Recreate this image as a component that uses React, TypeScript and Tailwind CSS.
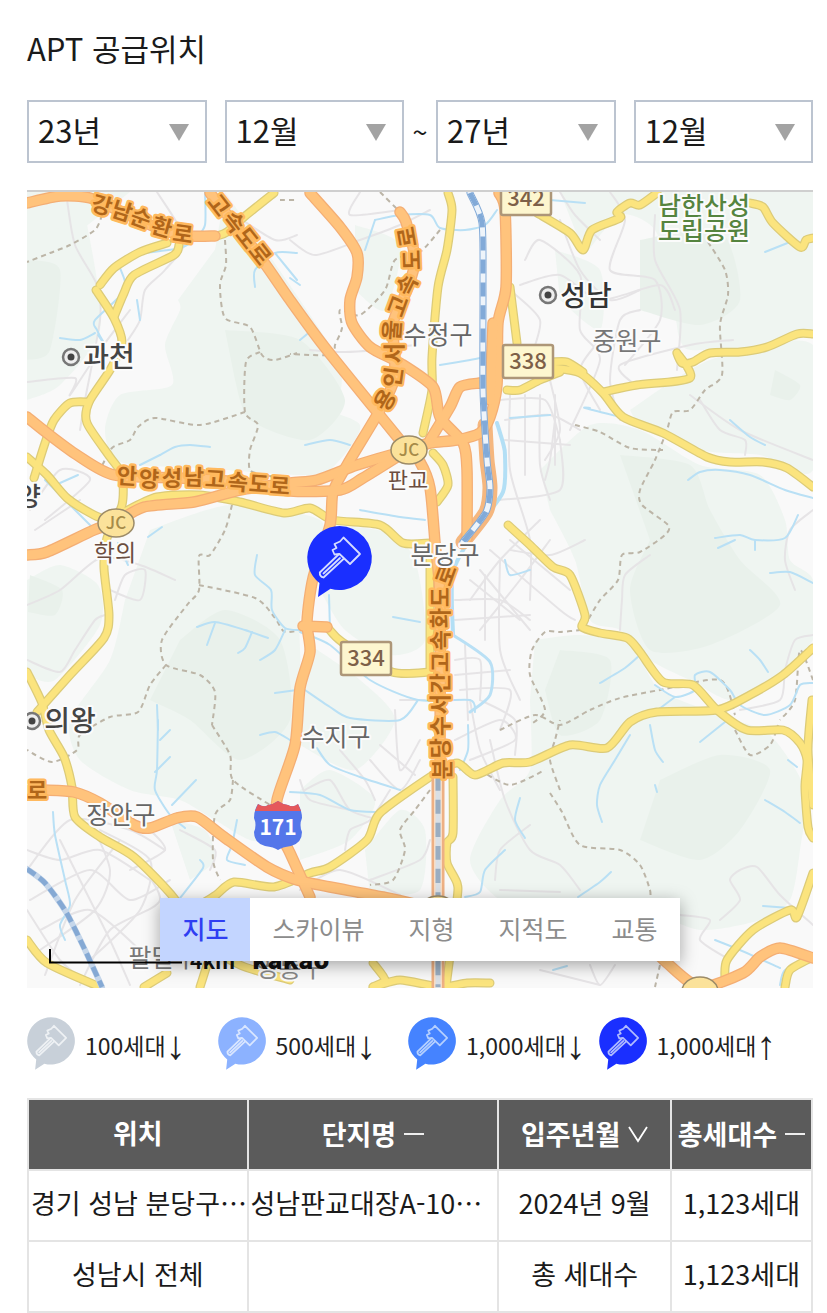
import React from "react";

type Tone = { fill: string; line: string };

/** Turns "x,y x,y ..." into a smooth path through every point. */
function curve(points: string): string {
  const p = points.split(" ").map((s) => s.split(",").map(Number));
  let d = `M${p[0][0]} ${p[0][1]}`;
  for (let i = 0; i < p.length - 1; i++) {
    const a = p[Math.max(i - 1, 0)];
    const b = p[i];
    const c = p[i + 1];
    const e = p[Math.min(i + 2, p.length - 1)];
    const k = 8;
    d += ` C${b[0] + (c[0] - a[0]) / k} ${b[1] + (c[1] - a[1]) / k} ${c[0] - (e[0] - b[0]) / k} ${c[1] - (e[1] - b[1]) / k} ${c[0]} ${c[1]}`;
  }
  return d;
}

const forests = [
  "27,215 75,195 90,240 100,330 60,385 27,400",
  "130,192 27,192 27,215 75,235",
  "222,240 240,310 262,360 300,400 360,425 330,470 300,475 200,468 120,462 105,430 120,395 172,385 165,345 180,310 178,300",
  "225,192 300,300 340,365 330,400 240,350 215,250",
  "27,580 60,565 98,585 100,625 55,680 27,675",
  "150,530 230,505 320,520 315,560 300,620 300,680 285,770 260,840 215,820 180,800 130,790 80,760 70,720 110,660 125,600",
  "330,525 385,532 415,560 425,640 390,655 345,630 320,590",
  "310,645 360,680 395,720 355,770 300,745",
  "560,192 670,192 813,192 813,330 700,350 680,340 672,290 655,230 620,215 585,255",
  "630,410 710,360 813,345 813,470 760,455 700,450 635,420",
  "540,470 590,425 640,430 700,465 760,475 785,520 790,560 813,580 813,640 740,700 690,680 650,660 620,630 590,620 575,560 550,510",
  "535,640 580,635 630,645 660,690 720,715 770,735 805,790 800,850 790,900 760,920 700,930 640,910 560,920 500,900 470,860 500,800 530,770 530,700",
  "365,850 400,810 425,830 420,890 370,895",
  "300,790 330,770 375,800 350,840 300,860",
  "355,225 400,245 385,310 355,290",
  "555,250 600,270 600,330 560,300",
  "170,820 205,830 215,860 190,880",
];

const hills = [
  "225,330 300,340 345,400 310,440 250,420 235,380",
  "27,260 60,270 50,350 27,360",
  "30,575 62,590 55,615 28,612",
  "180,640 225,610 280,640 290,720 240,760 190,720 150,700",
  "620,455 690,465 710,510 740,560 780,605 710,645 650,650 630,590 650,540",
  "640,240 720,230 740,300 700,325 640,310",
  "660,780 720,755 770,770 740,830 700,860 640,840",
  "775,370 800,385 790,400 770,395",
  "560,650 610,660 600,720 560,735 545,690",
];

const streets = [
  "67,200 75,245 97,285 100,320 85,400 80,430",
  "157,192 185,240 165,270 145,290 140,320 128,340",
  "27,382 75,378 70,395 100,350 130,310",
  "235,215 275,240 297,235",
  "27,605 60,590 100,558 140,565 175,580",
  "115,600 125,575 145,570 140,600 110,590",
  "290,240 315,255 360,240 400,225 430,210",
  "310,350 345,352 375,350 415,345",
  "27,660 60,672 75,650 95,620 105,615",
  "45,520 90,480 60,470 30,510",
  "35,530 80,500",
  "27,870 70,820 130,830 165,850",
  "30,900 90,870 130,900 170,880",
  "40,930 90,910 140,950",
  "60,840 80,880 110,940 130,985",
  "90,820 110,870 95,910 40,950",
  "120,840 75,900 45,975",
  "27,850 60,860 100,850 150,880",
  "100,830 150,860 140,910 90,960",
  "130,850 160,900 110,930 80,985",
  "27,910 60,960 90,985",
  "150,830 165,850 130,870",
  "180,830 215,850 210,870",
  "370,880 420,860 430,840",
  "520,285 560,275 600,300 660,285 675,310",
  "510,290 540,320 530,360",
  "525,260 540,240 580,275 580,330 600,360 570,430",
  "610,192 625,220 610,270 655,280 660,320 625,365",
  "655,215 655,260 680,310 677,370",
  "560,220 580,270 610,300 640,290",
  "600,340 580,370 600,410",
  "640,310 620,320 610,380 620,420",
  "550,380 560,430 545,460",
  "500,400 545,400 560,440",
  "505,420 550,415 580,430",
  "505,440 570,445",
  "510,395 510,470 530,540 530,600",
  "525,395 525,475",
  "540,395 540,465 550,500",
  "555,395 555,465",
  "470,600 500,560 540,520",
  "480,630 520,580 550,540",
  "470,580 520,620",
  "490,550 560,610 575,620",
  "510,540 570,590",
  "480,570 530,630",
  "455,600 500,600 530,620",
  "455,620 530,615",
  "485,575 485,640",
  "500,560 500,650 520,700",
  "455,660 480,660 480,700",
  "460,690 510,690 500,730",
  "455,675 510,670",
  "465,645 468,720",
  "510,550 550,555 585,540",
  "545,480 550,460 555,420",
  "500,500 560,490 560,440",
  "395,710 400,770 420,740",
  "370,760 400,790 420,760",
  "380,745 415,775",
  "400,700 425,700",
  "390,790 370,820 350,830 345,850",
  "455,740 500,720 515,740 470,760",
  "470,700 480,750 500,790",
  "480,700 515,720 515,755",
  "490,740 505,800 530,850 560,865 580,890",
  "495,880 500,850 530,825",
  "305,790 330,780 350,810 380,820",
  "300,780 310,800 350,810",
  "340,750 365,780 375,800",
  "620,630 622,600 625,575 650,555",
  "733,340 690,345 620,365 635,385",
  "690,395 740,430 813,460",
  "700,400 720,430 745,440 745,455",
  "813,510 790,530 785,560 795,590",
  "813,635 795,640 785,670 780,700 740,710",
  "720,920 740,900 730,880 740,870 757,867 780,895 813,925",
  "680,915 710,920 700,940 730,960",
  "560,192 575,215 600,240",
  "500,890 560,892",
  "300,890 340,870 400,895",
  "540,970 600,985",
  "590,965 600,985 615,965",
  "360,192 350,215 400,210",
];

const borders = [
  "102,215 95,230 70,245 50,253 27,262",
  "225,240 226,265 220,285 225,318 250,327 262,355 275,360 297,353",
  "260,352 246,362 245,412 258,425 250,450 250,470 265,475 290,480",
  "245,412 200,425 155,418 138,427 130,440 112,448 100,470",
  "232,505 225,530 210,555 199,556 199,590 187,605 162,640 166,665 200,675 215,692 212,725",
  "199,585 255,598 275,618 285,632 308,628",
  "166,665 150,685 138,712 110,717 80,735 77,750 52,762 27,750",
  "212,725 230,755 233,780 270,805",
  "233,780 230,800 215,815 213,860 220,880",
  "380,192 398,210",
  "440,230 420,252 395,260 385,290 360,315 340,310 342,328 335,345 332,355 290,354",
  "708,242 725,270 728,295 720,325 722,375 705,390 690,410 673,412 667,430 655,460 640,490 642,505 668,525 665,535 640,552 622,555 618,580 600,600 588,620",
  "575,425 600,432 630,448 663,450",
  "581,630 560,632 545,632 532,650 530,675 545,710 530,725",
  "500,730 535,715 560,725 590,710 620,698 660,690 720,680 735,715",
  "560,790 550,760 555,740 560,720",
  "550,793 562,812 580,845 620,850 640,865 650,890 650,900",
  "735,730 750,755 770,745 778,725",
  "430,790 415,810 400,830 405,850 393,880 370,885",
  "813,680 800,650 795,700 780,720",
  "660,965 655,987",
  "480,770 510,785 545,770",
  "280,200 298,200",
];

const rivers = [
  "205,192 205,225 195,240",
  "145,253 180,248 195,240",
  "120,268 125,290 95,320 97,330 105,345 98,335",
  "60,338 80,340 95,333",
  "137,300 140,320",
  "255,287 255,270 275,253 297,253",
  "275,253 297,280",
  "160,455 175,447 190,445 210,447",
  "375,220 400,215 430,215 440,228 465,230 485,225 497,210",
  "375,220 365,250",
  "290,278 300,285",
  "300,340 312,330",
  "440,365 470,360 485,357",
  "305,445 330,440 350,445",
  "378,420 390,435",
  "510,418 550,415",
  "550,200 585,203",
  "60,483 78,475",
  "45,480 95,530",
  "140,465 160,455",
  "148,537 162,527",
  "118,543 128,565",
  "257,555 255,575 271,590 272,610 285,628 300,630",
  "197,627 215,622 245,630 268,638",
  "215,623 207,645",
  "252,632 245,648 238,653",
  "285,630 275,650 260,660",
  "275,693 297,690",
  "157,705 158,730",
  "329,595 330,630",
  "300,632 330,645 370,680 418,700 470,700 475,712",
  "305,690 330,707 350,718 400,720 418,700",
  "360,510 400,517 425,520",
  "393,617 420,622",
  "505,560 510,575 530,570",
  "158,720 157,770 155,790 170,815 185,828",
  "170,730 160,740",
  "155,772 170,757",
  "172,805 196,780",
  "260,735 275,732 290,740",
  "237,820 232,845 227,860 245,865",
  "200,860 203,868 180,898",
  "53,812 55,835 65,880 70,905 60,925 65,940",
  "317,748 330,765 360,777 400,790",
  "290,792 320,795 350,810 380,812",
  "468,725 468,750 460,770",
  "520,798 515,820 525,838",
  "505,850 485,870 480,892 465,897",
  "688,480 700,472 720,470 750,475 785,490 813,498",
  "715,538 740,535 755,540 785,538 798,515",
  "755,540 755,550",
  "735,540 718,548",
  "770,573 790,572 813,583",
  "600,683 625,668 640,655",
  "655,685 675,697 695,690 695,675 710,672 730,690 740,705 765,715 790,705 800,685 813,683",
  "675,697 655,712",
  "750,650 760,660 768,672",
  "630,735 615,760 600,785 597,805 602,822",
  "650,725 655,750 663,762",
  "655,785 657,792",
  "765,800 785,812 800,823",
  "788,760 797,767",
  "700,742 725,722",
  "578,897 600,882 611,872",
  "763,906 790,908",
  "715,940 740,950 780,968",
  "553,970 567,966",
  "780,985 785,970 810,962",
  "590,408 585,408 620,417",
  "730,420 750,437 765,445",
  "765,252 790,242",
];

const yellows = [
  "274,193 244,217 227,232 217,236",
  "167,243 140,252 114,268 100,285",
  "179,245 174,255 134,275 124,293 114,317",
  "96,290 114,318 122,343 110,370 89,402 87,423 110,457 122,475 122,505 107,538 104,568 109,615 104,638 70,675 37,712",
  "89,402 70,403 54,420 45,443 34,478",
  "27,457 47,475 67,498 94,515 115,523",
  "122,513 157,497 200,495 240,502 284,513 310,508 333,520 380,525 403,543 430,543",
  "27,672 42,703 49,730 64,757 72,787 75,817 100,837 134,857 174,898 200,940 240,965 290,980",
  "27,940 47,963 100,987",
  "144,987 167,973",
  "200,987 207,965",
  "200,905 216,895 234,882 274,887 310,873 330,867 367,840 380,813 433,775 457,763 475,775 503,763 530,762 570,745 607,748 630,722 657,712 717,710 750,695 783,675 813,648",
  "453,777 453,833 447,843 447,863 457,883 457,900 446,987",
  "448,193 452,210 447,250 438,287 432,357 432,390 423,433",
  "433,453 443,465 448,485 437,502",
  "510,287 517,343",
  "537,213 570,233 583,250 592,230 620,218 617,212 630,203 640,205 657,193",
  "750,203 763,207 773,223 800,247 806,240 813,238",
  "553,368 580,373 603,393 623,417 663,433 707,457 730,462 763,462 787,468 813,487",
  "553,362 567,362 583,372",
  "603,392 637,385 690,378 677,353 682,363 693,362 710,353 740,352 767,347 797,334 813,334",
  "507,390 520,390 540,380 560,372",
  "508,525 530,545 553,567 570,575 585,615 582,627 600,633 627,638 640,652 663,682 693,685 717,710 747,730 783,730 800,743 807,760 805,787 808,827 813,838",
  "812,700 808,750 813,805",
  "813,873 797,917 790,910 753,930 727,960 725,980",
  "813,957 790,970 785,987",
  "328,628 342,642 392,672 430,672",
  "430,560 430,672",
  "373,963 385,980 373,987 400,980 440,987 467,983 490,983",
];

const oranges = [
  "27,203 60,196 90,198 122,212 160,229 190,236 215,236",
  "210,193 260,257 290,300 323,345 373,407 408,450",
  "310,193 340,227 357,253 357,277 350,300 352,323 370,347 400,363 433,387 440,417 463,443 467,470 467,538",
  "400,212 406,222 415,260 407,290 393,323 395,357 393,383 380,410 347,465 333,492 330,525 313,578 307,622 310,652 300,688 295,745 277,800 279,830 290,853 310,897",
  "27,417 47,433 77,455 114,475 180,478 240,482 290,491 340,490 363,478 408,450",
  "27,555 47,552 94,530 115,523 144,507 194,502 240,490 290,483 317,480 357,465 408,450",
  "408,450 430,443 457,440 480,433 490,417 497,385 498,323 506,287 505,210 499,193",
  "490,400 493,323",
  "430,440 450,407 460,387 480,383",
  "408,450 420,462 430,488 435,542 440,600 440,770",
  "44,790 74,792 100,803 134,825 150,828 177,818 197,817 224,837 267,867 297,880 330,887 383,897 440,910",
  "640,935 667,963 700,987 743,973 760,957 780,948 813,958",
  "303,626 327,627",
];

type Glyph = [string, number, number, number];

const roadGlyphs: Glyph[] = [
  ["강", 102, 205, 16], ["남", 122, 211, 18], ["순", 141, 218, 20], ["환", 162, 227, 16], ["로", 183, 234, 8],
  ["고", 219, 205, 52], ["속", 234, 222, 52], ["도", 247, 238, 52], ["로", 260, 254, 52],
  ["용", 385, 400, -60], ["인", 393, 377, -82], ["서", 394, 353, -90], ["울", 392, 330, -86],
  ["고", 398, 306, -70], ["속", 407, 285, -64], ["도", 412, 260, -92], ["로", 407, 237, -100],
  ["안", 127, 476, 3], ["양", 149, 479, 3], ["성", 172, 478, 2], ["남", 194, 477, 2],
  ["고", 215, 479, 3], ["속", 238, 482, 4], ["도", 259, 484, 4], ["로", 280, 486, 4],
  ["분", 442, 769, -90], ["당", 440, 748, -90], ["수", 440, 726, -90], ["서", 440, 704, -90], ["간", 440, 683, -90],
  ["고", 440, 662, -90], ["속", 440, 640, -90], ["화", 440, 618, -90], ["도", 440, 597, -90], ["로", 446, 575, -70],
  ["로", 37, 790, 0],
];

type Label = { text: string; x: number; y: number; size: number; color: string; weight?: number };

const places: Label[] = [
  { text: "과천", x: 109, y: 367, size: 28, color: "#444", weight: 500 },
  { text: "성남", x: 586, y: 306, size: 28, color: "#333", weight: 500 },
  { text: "의왕", x: 70, y: 731, size: 28, color: "#444", weight: 500 },
  { text: "양", x: 29, y: 506, size: 26, color: "#444", weight: 500 },
  { text: "수정구", x: 438, y: 344, size: 25, color: "#666" },
  { text: "중원구", x: 627, y: 350, size: 25, color: "#777" },
  { text: "분당구", x: 445, y: 564, size: 25, color: "#666" },
  { text: "수지구", x: 336, y: 746, size: 25, color: "#666" },
  { text: "장안구", x: 121, y: 824, size: 25, color: "#666" },
  { text: "팔달구", x: 163, y: 967, size: 25, color: "#777" },
  { text: "영통구", x: 290, y: 977, size: 25, color: "#888" },
  { text: "판교", x: 408, y: 488, size: 22, color: "#6b4d40" },
  { text: "학의", x: 115, y: 561, size: 23, color: "#6b4d40" },
  { text: "남한산성", x: 704, y: 215, size: 25, color: "#55843f", weight: 500 },
  { text: "도립공원", x: 704, y: 240, size: 25, color: "#55843f", weight: 500 },
];

function Polys({ items, fill }: { items: string[]; fill: string }) {
  return (
    <g fill={fill}>
      {items.map((pts) => (
        <path key={pts} d={curve(pts) + "Z"} />
      ))}
    </g>
  );
}

function Lines({ items, stroke, width, dash }: { items: string[]; stroke: string; width: number; dash?: string }) {
  return (
    <g fill="none" stroke={stroke} strokeWidth={width} strokeDasharray={dash} strokeLinecap={dash ? "butt" : "round"} strokeLinejoin="round">
      {items.map((pts) => (
        <path key={pts} d={curve(pts)} />
      ))}
    </g>
  );
}

function Hammer({ stroke, width }: { stroke: string; width: number }) {
  return (
    <g fill="none" stroke={stroke} strokeWidth={width} strokeLinejoin="round" strokeLinecap="round">
      <path d="M36.500 11.500 L53 28 L43 38 L32.500 28 L27.500 28.500 L25.500 24 L29.500 22 L27.500 18 L33 15.500 Z" />
      <path d="M31.500 28.500 L12.800 46.500 Q12.500 50.500 16.500 51.500 L36.500 33" />
      <path d="M16.500 47.500 L33 32" />
    </g>
  );
}

function BubbleShape({ fill, line, width }: Tone & { width: number }) {
  return (
    <>
      <path d="M32.500 0 A32.500 32 0 1 1 23.500 62.800 L11 71 L12.500 57 A32.500 32 0 0 1 32.500 0Z" fill={fill} />
      <Hammer stroke={line} width={width} />
    </>
  );
}

function RouteSign({ x, y, n }: { x: number; y: number; n: string }) {
  return (
    <g>
      <rect x={x - 25} y={y - 16} width="50" height="33" rx="2" fill="#fdf6cf" stroke="#ad9678" strokeWidth="2.500" />
      <text x={x} y={y + 8} fontSize="22" fontWeight="500" fill="#7d6048" textAnchor="middle">{n}</text>
    </g>
  );
}

function Junction({ x, y, name }: { x: number; y: number; name?: string }) {
  return (
    <g>
      <ellipse cx={x} cy={y} rx="18" ry="14" fill="#fbe29a" stroke="#9c8b68" strokeWidth="1.500" />
      {name && <text x={x} y={y + 6} fontSize="17" fontWeight="500" fill="#a68b48" textAnchor="middle">{name}</text>}
    </g>
  );
}

function CityDot({ x, y }: { x: number; y: number }) {
  return (
    <g>
      <circle cx={x} cy={y} r="8" fill="#eee" stroke="#777" strokeWidth="2.500" />
      <circle cx={x} cy={y} r="3.500" fill="#444" />
    </g>
  );
}

const rail = "470,193 482,223 483,290 483,390 487,460 490,488 486,512 463,542";
const railSouth = "438,777 438,987";
const railWest = "27,869 45,883 66,912 85,950 102,987";
const stream = "497,423 503,443 505,455 503,492 477,528 453,572 453,635";
const streamSouth = "453,635 490,662 490,695 470,712";

function MapDrawing() {
  return (
    <svg
      viewBox="27 192 786 796"
      preserveAspectRatio="xMidYMid slice"
      className="block h-[796px] w-full bg-[#f9f9f9]"
      role="img"
      aria-label="지도"
    >
      <Polys items={forests} fill="#eff5f1" />
      <Polys items={hills} fill="#e9f1eb" />
      <Lines items={streets} stroke="#e6e4e6" width={2} />
      <Lines items={borders} stroke="#bcb5a7" width={2} dash="5 4" />
      <Lines items={rivers} stroke="#b9e0f5" width={2} />
      <Lines items={[stream]} stroke="#b3dff5" width={4} />
      <Lines items={[streamSouth]} stroke="#b9e0f5" width={3} />
      <Lines items={yellows} stroke="#dccb78" width={9} />
      <Lines items={yellows} stroke="#fbe47e" width={6.5} />
      <Lines items={[railWest]} stroke="#c5d6ea" width={6} />
      <Lines items={[railWest]} stroke="#85a9d4" width={5} dash="10 5" />
      <Lines items={["485,425 487,460 490,488 486,512 463,542"]} stroke="#f5b77f" width={15} />
      <Lines items={oranges} stroke="#f4ae74" width={11.5} />
      <Lines items={oranges} stroke="#ffc37c" width={9} />
      <Lines items={[rail]} stroke="#82aad8" width={7} />
      <Lines items={[rail]} stroke="#eef4fa" width={5} />
      <Lines items={[rail]} stroke="#82aad8" width={5} dash="14 9" />
      <Lines items={[railSouth]} stroke="#eeb083" width={13} />
      <Lines items={[railSouth]} stroke="#f8ddc4" width={8} />
      <Lines items={[railSouth]} stroke="#d9dfe5" width={5} />
      <Lines items={[railSouth]} stroke="#9aadc1" width={5} dash="14 9" />

      <Junction x={409} y={450} name="JC" />
      <Junction x={116} y={523} name="JC" />
      <Junction x={700} y={991} />
      <Junction x={438} y={910} />

      <g fontSize="22" fontWeight="700" textAnchor="middle" fill="#b0661a" stroke="#ffb95e" strokeWidth="5" strokeLinejoin="round" style={{ paintOrder: "stroke" }}>
        {roadGlyphs.map(([ch, x, y, a], i) => (
          <text key={i} transform={`translate(${x} ${y}) rotate(${a})`} y="8">{ch}</text>
        ))}
      </g>

      <RouteSign x={526} y={198} n="342" />
      <RouteSign x={528} y={361} n="338" />
      <RouteSign x={366} y={658} n="334" />

      <g>
        <path d="M258 804 Q264 808 268 805 Q274 804 278 801 Q282 804 288 805 Q293 808 298 804 Q302 811 302 818 Q299 825 302 832 Q302 843 291 846 Q282 847 278 850 Q274 847 265 846 Q254 843 254 832 Q257 825 254 818 Q254 810 258 804Z" fill="#5476ea" />
        <path d="M258 804 Q264 808 268 805 Q274 804 278 801 Q282 804 288 805 Q293 808 298 804 L301 811 L255 811Z" fill="#e5585c" />
        <text x="278" y="835" fontSize="21" fontWeight="700" fill="#fff" textAnchor="middle">171</text>
      </g>

      <CityDot x={71} y={357} />
      <CityDot x={548} y={295} />
      <CityDot x={32} y={721} />

      <g textAnchor="middle" stroke="#fbfbfb" strokeWidth="4" strokeLinejoin="round" style={{ paintOrder: "stroke" }}>
        {places.map((l) => (
          <text key={l.text} x={l.x} y={l.y} fontSize={l.size} fontWeight={l.weight ?? 400} fill={l.color}>{l.text}</text>
        ))}
      </g>

      <path d="M50 949 V962.500 H182" fill="none" stroke="#000" strokeWidth="2" />
      <text x="190" y="969" fontSize="21" fontWeight="700" fill="#111">4km</text>
      <text x="252" y="969" fontSize="25" fontWeight="900" fill="#111">kakao</text>

      <g transform="translate(307 526)">
        <BubbleShape fill="#1a2fff" line="#d5dcff" width={1.8} />
      </g>
    </svg>
  );
}

function Picker({ label, value, options }: { label: string; value: string; options: string[] }) {
  return (
    <div className="relative min-w-0 flex-1">
      <select
        aria-label={label}
        defaultValue={value}
        className="block h-[63px] w-full appearance-none border-2 border-[#bcc4d0] bg-white pb-1 pl-[9px] text-[31px] leading-[40px] text-[#1a1a1a]"
      >
        {options.map((o) => (
          <option key={o}>{o}</option>
        ))}
      </select>
      <svg viewBox="0 0 20 17" className="pointer-events-none absolute top-6 right-[18px] h-[17px] w-5" aria-hidden="true">
        <path d="M0 0H20L10 17Z" fill="#a3a3a3" />
      </svg>
    </div>
  );
}

const years = ["23년", "24년", "25년", "26년", "27년"];
const months = ["1월", "2월", "3월", "4월", "5월", "6월", "7월", "8월", "9월", "10월", "11월", "12월"];
const mapTypes = ["지도", "스카이뷰", "지형", "지적도", "교통"];

const legend: (Tone & { text: string; arrow: string })[] = [
  { text: "100세대", arrow: "↓", fill: "#c8d0d9", line: "#eef1f4" },
  { text: "500세대", arrow: "↓", fill: "#8cb2ff", line: "#d9e6ff" },
  { text: "1,000세대", arrow: "↓", fill: "#4583ff", line: "#b5d0ff" },
  { text: "1,000세대", arrow: "↑", fill: "#1a2fff", line: "#b0bbff" },
];

function SortMark({ kind }: { kind: "none" | "down" }) {
  return (
    <svg viewBox="0 0 20 20" className="h-5 w-5 shrink-0" fill="none" stroke="#fff" strokeWidth="1.800" aria-hidden="true">
      <path d={kind === "none" ? "M0 10H20" : "M1 3L10 17L19 3"} />
    </svg>
  );
}

function Head({ title, sort }: { title: string; sort?: "none" | "down" }) {
  return (
    <th scope="col" className="h-[71px] border-2 border-[#e4e4e4] bg-[#5b5b5b] px-0 pt-0 pb-1 font-bold text-white">
      {sort ? (
        <button type="button" className="inline-flex items-center gap-2 whitespace-nowrap align-middle font-bold">
          {title}
          <SortMark kind={sort} />
        </button>
      ) : (
        title
      )}
    </th>
  );
}

function Cell({ children, start }: { children?: React.ReactNode; start?: boolean }) {
  return (
    <td
      className={
        start
          ? "h-[71px] overflow-hidden border-2 border-[#e4e4e4] px-[2px] pt-0 pb-[6px] text-left whitespace-nowrap"
          : "h-[71px] overflow-hidden border-2 border-[#e4e4e4] px-[2px] pt-0 pb-[6px] whitespace-nowrap"
      }
    >
      {children}
    </td>
  );
}

function More() {
  return <span className="inline-block">⋯</span>;
}

export default function App() {
  return (
    <main lang="ko" className="bg-white pt-7 pr-[14px] pl-[27px] font-['Noto_Sans_CJK_KR',sans-serif] text-[#1a1a1a]">
      <h1 className="text-[31px] leading-[40px]">APT 공급위치</h1>

      <div className="mt-8 flex items-center">
        <div className="flex flex-1 gap-[18px]">
          <Picker label="시작 연도" value="23년" options={years} />
          <Picker label="시작 월" value="12월" options={months} />
        </div>
        <span className="w-8 text-center text-[27px] leading-[40px]">~</span>
        <div className="flex flex-1 gap-[18px]">
          <Picker label="종료 연도" value="27년" options={years} />
          <Picker label="종료 월" value="12월" options={months} />
        </div>
      </div>

      <section className="relative mt-[27px] overflow-hidden border-t-2 border-[#cfcfcf]">
        <MapDrawing />
        <div className="absolute inset-x-0 bottom-[27px] flex justify-center">
          <div className="flex bg-white shadow-[0_4px_16px_rgba(0,0,0,0.35)]">
            {mapTypes.map((t, i) => (
              <button
                key={t}
                type="button"
                aria-pressed={i === 0}
                className={
                  i === 0
                    ? "h-[63px] bg-[#c3d5ff] px-[22px] pb-1 text-[25px] leading-[40px] font-medium text-[#2f3ef2]"
                    : "h-[63px] px-[22px] pb-1 text-[25px] leading-[40px] text-[#8c8c8c]"
                }
              >
                {t}
              </button>
            ))}
          </div>
        </div>
      </section>

      <ul className="mt-[29px] grid grid-cols-4 pr-6">
        {legend.map((l) => (
          <li key={l.text + l.arrow} className="flex items-center gap-[10px] whitespace-nowrap text-[#222]">
            <svg viewBox="0 0 65 71" className="h-[53px] w-12 shrink-0" aria-hidden="true">
              <BubbleShape fill={l.fill} line={l.line} width={2.4} />
            </svg>
            <span className="flex items-center pt-[2px] text-[23px] leading-[32px]">
              {l.text}
              <span className="font-['Liberation_Sans',sans-serif] text-[40px] leading-[32px]">{l.arrow}</span>
            </span>
          </li>
        ))}
      </ul>

      <table className="mt-7 w-full table-fixed border-collapse text-center text-[27px] leading-[40px]">
        <colgroup>
          <col className="w-[28%]" />
          <col className="w-[32%]" />
          <col className="w-[22%]" />
          <col className="w-[18%]" />
        </colgroup>
        <thead>
          <tr>
            <Head title="위치" />
            <Head title="단지명" sort="none" />
            <Head title="입주년월" sort="down" />
            <Head title="총세대수" sort="none" />
          </tr>
        </thead>
        <tbody>
          <tr>
            <Cell start>
              경기 성남 분당구
              <More />
            </Cell>
            <Cell start>
              성남판교대장A-10
              <More />
            </Cell>
            <Cell>2024년 9월</Cell>
            <Cell>1,123세대</Cell>
          </tr>
          <tr>
            <Cell>성남시 전체</Cell>
            <Cell />
            <Cell>총 세대수</Cell>
            <Cell>1,123세대</Cell>
          </tr>
        </tbody>
      </table>
    </main>
  );
}
